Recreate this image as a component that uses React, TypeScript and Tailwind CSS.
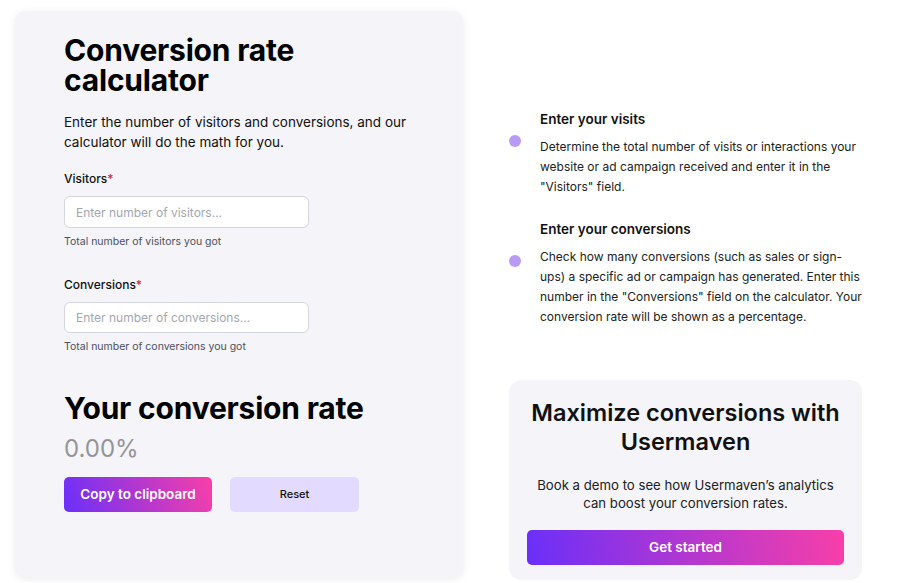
import React from "react";

function Bullet({ title, children }: { title: string; children: React.ReactNode }) {
  return (
    <div className="flex items-center">
      <div className="w-[31px] shrink-0">
        <div className="mb-[26px] h-[12px] w-[12px] rounded-full bg-[#b99af7]" />
      </div>
      <div className="flex-1">
        <h3 className="text-[13.5px] font-semibold leading-[18px] text-[#111]">{title}</h3>
        <p className="mt-[9px] text-[12px] leading-[20px] text-[#222]">{children}</p>
      </div>
    </div>
  );
}

export default function App() {
  return (
    <div
      className="flex h-[583px] w-[918px] overflow-hidden bg-white pl-[15px] pt-[11px]"
      style={{ fontFamily: "Inter, 'Noto Sans', sans-serif" }}
    >
      <div className="h-[566px] w-[448px] shrink-0 rounded-[10px] bg-[#f4f4f9] pl-[49px] pt-[24px] shadow-[0_2px_8px_rgba(0,0,0,0.08)]">
        <div className="w-[360px]">
          <h1 className="text-[30px] font-bold leading-[30px] tracking-[-0.2px] text-black">
            Conversion rate calculator
          </h1>
          <p className="mt-[17px] text-[13.5px] leading-[20px] text-[#111]">
            Enter the number of visitors and conversions, and our calculator will do the math for you.
          </p>

          <label className="mt-[18px] block text-[12px] font-medium leading-[18px] text-[#111]">
            Visitors<span className="text-[#e11d48]">*</span>
          </label>
          <input
            className="mt-[8px] block h-[32px] w-[245px] rounded-[6px] border border-[#d4d6dd] bg-white px-[11px] text-[12px] text-[#111] outline-none placeholder:text-[#a3a7b0]"
            placeholder="Enter number of visitors..."
          />
          <p className="mt-[7px] text-[10.5px] leading-[14px] text-[#4b5060]">Total number of visitors you got</p>

          <label className="mt-[27px] block text-[12px] font-medium leading-[18px] text-[#111]">
            Conversions<span className="text-[#e11d48]">*</span>
          </label>
          <input
            className="mt-[8px] block h-[31px] w-[245px] rounded-[6px] border border-[#d4d6dd] bg-white px-[11px] text-[12px] text-[#111] outline-none placeholder:text-[#a3a7b0]"
            placeholder="Enter number of conversions..."
          />
          <p className="mt-[7px] text-[10.5px] leading-[14px] text-[#4b5060]">Total number of conversions you got</p>

          <h2 className="mt-[37px] text-[30px] font-bold leading-[34px] tracking-[-0.2px] text-black">
            Your conversion rate
          </h2>
          <div className="mt-[9px] text-[24px] leading-[30px] text-[#959595]">0.00%</div>

          <div className="mt-[13px] flex gap-[18px]">
            <button className="h-[35px] w-[148px] rounded-[5px] bg-[linear-gradient(70deg,#6a2ff9,#f83fa8)] text-[13.5px] font-semibold text-white">
              Copy to clipboard
            </button>
            <button className="h-[35px] w-[129px] rounded-[5px] bg-[#e2dbff] text-[11px] font-medium text-[#111]">
              Reset
            </button>
          </div>
        </div>
      </div>

      <div className="ml-[46px] flex w-[356px] flex-col pt-[99px]">
        <div className="flex flex-col gap-[23px]">
          <Bullet title="Enter your visits">
            Determine the total number of visits or interactions your website or ad campaign received and enter it in
            the "Visitors" field.
          </Bullet>
          <Bullet title="Enter your conversions">
            Check how many conversions (such as sales or sign-ups) a specific ad or campaign has generated. Enter this
            number in the "Conversions" field on the calculator. Your conversion rate will be shown as a percentage.
          </Bullet>
        </div>

        <div className="mt-[53px] w-[353px] rounded-[12px] bg-[#f4f4f9] px-[18px] pb-[15px] pt-[18px] text-center">
          <h2 className="text-[23.5px] font-semibold leading-[29px] text-[#111]">
            Maximize conversions with Usermaven
          </h2>
          <p className="mx-auto mt-[20px] w-[310px] text-[13.2px] leading-[18px] text-[#222]">
            Book a demo to see how Usermaven’s analytics can boost your conversion rates.
          </p>
          <button className="mt-[18px] h-[35px] w-full rounded-[5px] bg-[linear-gradient(80deg,#6a2ff9,#f83fa8)] text-[13.5px] font-semibold text-white">
            Get started
          </button>
        </div>
      </div>
    </div>
  );
}
